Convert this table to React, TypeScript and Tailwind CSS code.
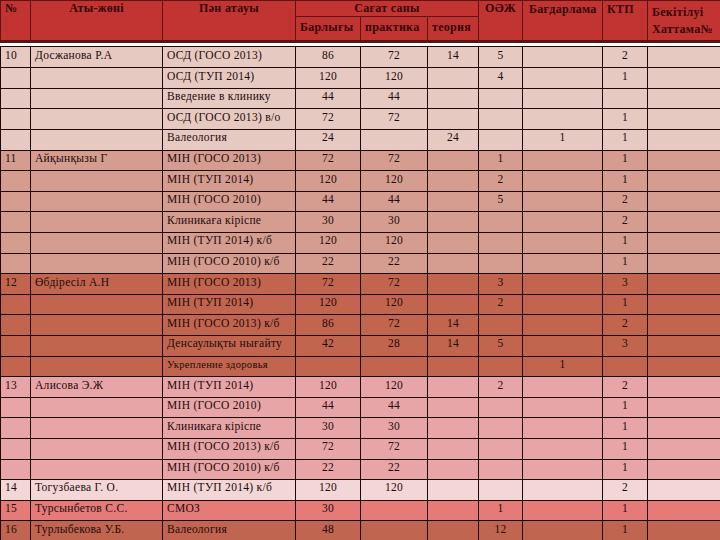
import React from 'react'

type Row = {
  no?: string
  name?: string
  subj: string
  total?: string
  pr?: string
  th?: string
  oaj?: string
  prog?: string
  ktp?: string
  bg: string
  small?: boolean
}

const G10 = 'bg-[#e6c9c1]'
const G11 = 'bg-[#d59d90]'
const G12 = 'bg-[#c2654f]'
const G13 = 'bg-[#e8a5a7]'
const G14 = 'bg-[#f2d7d6]'
const G15 = 'bg-[#e47b79]'
const G16 = 'bg-[#c0654f]'

const ROWS: Row[] = [
  { no: '10', name: 'Досжанова Р.А', subj: 'ОСД (ГОСО 2013)', total: '86', pr: '72', th: '14', oaj: '5', ktp: '2', bg: G10 },
  { subj: 'ОСД (ТУП 2014)', total: '120', pr: '120', oaj: '4', ktp: '1', bg: G10 },
  { subj: 'Введение в клинику', total: '44', pr: '44', bg: G10 },
  { subj: 'ОСД (ГОСО 2013) в/о', total: '72', pr: '72', ktp: '1', bg: G10 },
  { subj: 'Валеология', total: '24', th: '24', prog: '1', ktp: '1', bg: G10 },
  { no: '11', name: 'Айқынқызы Г', subj: 'МІН (ГОСО 2013)', total: '72', pr: '72', oaj: '1', ktp: '1', bg: G11 },
  { subj: 'МІН (ТУП 2014)', total: '120', pr: '120', oaj: '2', ktp: '1', bg: G11 },
  { subj: 'МІН (ГОСО 2010)', total: '44', pr: '44', oaj: '5', ktp: '2', bg: G11 },
  { subj: 'Клиникаға кіріспе', total: '30', pr: '30', ktp: '2', bg: G11 },
  { subj: 'МІН (ТУП 2014) к/б', total: '120', pr: '120', ktp: '1', bg: G11 },
  { subj: 'МІН (ГОСО 2010) к/б', total: '22', pr: '22', ktp: '1', bg: G11 },
  { no: '12', name: 'Өбдіресіл А.Н', subj: 'МІН (ГОСО 2013)', total: '72', pr: '72', oaj: '3', ktp: '3', bg: G12 },
  { subj: 'МІН (ТУП 2014)', total: '120', pr: '120', oaj: '2', ktp: '1', bg: G12 },
  { subj: 'МІН (ГОСО 2013) к/б', total: '86', pr: '72', th: '14', ktp: '2', bg: G12 },
  { subj: 'Денсаулықты нығайту', total: '42', pr: '28', th: '14', oaj: '5', ktp: '3', bg: G12 },
  { subj: 'Укрепление здоровья', prog: '1', bg: G12, small: true },
  { no: '13', name: 'Алисова Э.Ж', subj: 'МІН (ТУП 2014)', total: '120', pr: '120', oaj: '2', ktp: '2', bg: G13 },
  { subj: 'МІН (ГОСО 2010)', total: '44', pr: '44', ktp: '1', bg: G13 },
  { subj: 'Клиникаға кіріспе', total: '30', pr: '30', ktp: '1', bg: G13 },
  { subj: 'МІН (ГОСО 2013) к/б', total: '72', pr: '72', ktp: '1', bg: G13 },
  { subj: 'МІН (ГОСО 2010) к/б', total: '22', pr: '22', ktp: '1', bg: G13 },
  { no: '14', name: 'Тогузбаева Г. О.', subj: 'МІН (ТУП 2014) к/б', total: '120', pr: '120', ktp: '2', bg: G14 },
  { no: '15', name: 'Турсынбетов С.С.', subj: 'СМОЗ', total: '30', oaj: '1', ktp: '1', bg: G15 },
  { no: '16', name: 'Турлыбекова У.Б.', subj: 'Валеология', total: '48', oaj: '12', ktp: '1', bg: G16 },
]

// column template shared by header and body rows
const COLS = 'grid-cols-[30px_132px_133px_65px_67px_51px_44px_80px_45px_73px]'
const hc = 'border-r border-b border-[#5c1512] px-1 leading-[13px] whitespace-nowrap overflow-hidden'
const bc = 'border-r border-b border-[#1e0808] h-full flex items-center pb-[3px]'

export default function App() {
  return (
    <div className="w-[720px] h-[540px] overflow-hidden bg-white font-['Liberation_Serif',serif]">
      <div className={`grid ${COLS} grid-rows-[16px_24px] bg-[#c23431] border-l border-t border-[#5c1512] text-[12px] tracking-[0.3px] font-bold text-[#330808] border-b-2`}>
        <div className={`${hc} row-span-2 pt-[1px]`}>№</div>
        <div className={`${hc} row-span-2 text-center pt-[1px]`}>Аты-жөні</div>
        <div className={`${hc} row-span-2 text-center pt-[1px]`}>Пән атауы</div>
        <div className={`${hc} col-span-3 text-center pt-[1px]`}>Сағат саны</div>
        <div className={`${hc} row-span-2 text-center pt-[1px]`}>ОӘЖ</div>
        <div className={`${hc} row-span-2 pt-[2px] pl-[6px]`}>Бағдарлама</div>
        <div className={`${hc} row-span-2 pt-[2px]`}>КТП</div>
        <div className={`${hc} row-span-2 pt-[3px] leading-[17px]`}>
          Бекітілуі
          <br />
          Хаттама№
        </div>
        <div className={`${hc} pt-[4px]`}>Барлығы</div>
        <div className={`${hc} pt-[4px]`}>практика</div>
        <div className={`${hc} pt-[4px]`}>теория</div>
      </div>
      <div className="h-[3px]" />
      <div className="border-t border-l border-[#1e0808] text-[11.5px] tracking-[0.3px] text-[#1c0b0b]">
        {ROWS.map((r, i) => (
          <div key={i} className={`grid ${COLS} h-[20.6px] ${r.bg}`}>
            <div className={`${bc} pl-[4px]`}>{r.no}</div>
            <div className={`${bc} pl-[4px]`}>{r.name}</div>
            <div className={`${bc} pl-[4px] ${r.small ? 'text-[10.5px]' : ''}`}>{r.subj}</div>
            <div className={`${bc} justify-center`}>{r.total}</div>
            <div className={`${bc} justify-center`}>{r.pr}</div>
            <div className={`${bc} justify-center`}>{r.th}</div>
            <div className={`${bc} justify-center`}>{r.oaj}</div>
            <div className={`${bc} justify-center`}>{r.prog}</div>
            <div className={`${bc} justify-center`}>{r.ktp}</div>
            <div className={bc} />
          </div>
        ))}
      </div>
    </div>
  )
}
